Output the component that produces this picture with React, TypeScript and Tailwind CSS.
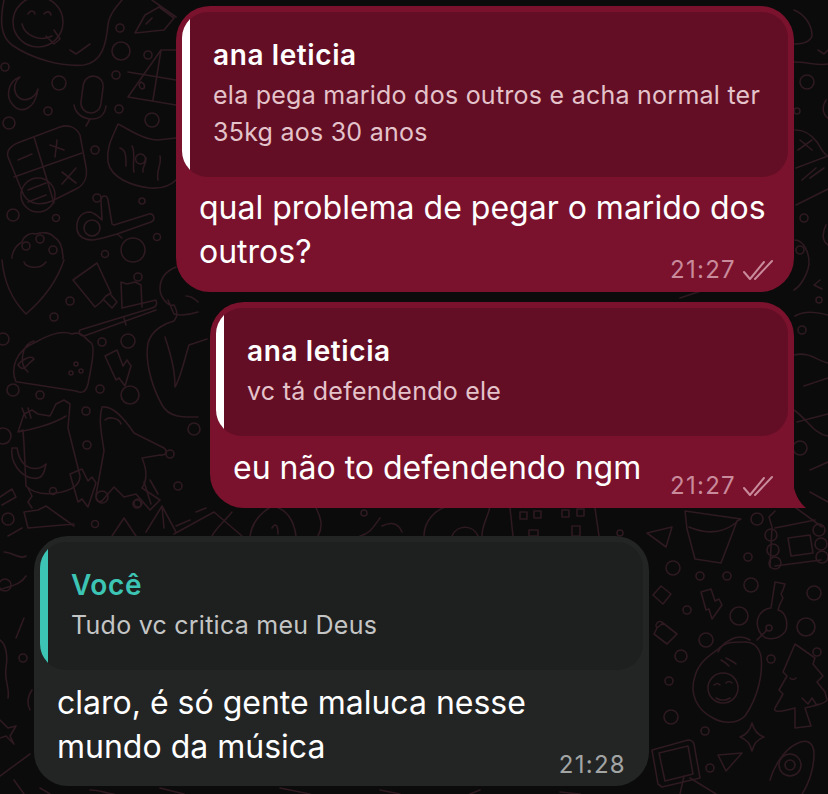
const Doodles = () => (
  <svg className="absolute inset-0" width="828" height="794" viewBox="0 0 828 794" fill="none" stroke="#2e1a20" strokeWidth="1.6" strokeLinecap="round" strokeLinejoin="round">
    {/* smiley + blob */}
    <circle cx="38" cy="22" r="25" />
    <path d="M22 24c3 12 18 18 30 12M28 14c2-4 6-4 7 0M44 14c2-3 6-3 7 1M46 36l8 8 6-5-6-9" />
    <path d="M4 0c-4 20-4 36 8 45 20 14 50 22 72 20 18-3 22-20 24-40 1-10 8-18 14-25" />
    <path d="M70 50l6 4 14-10M76 54l14-10" />
    {/* pen */}
    <path d="M135 33l10-18 14-8 15 11-10 12-29 3zM146 24l6-6M152 0l24 17" />
    <circle cx="120" cy="28" r="4" />
    <circle cx="121" cy="51" r="9" />
    <circle cx="148" cy="55" r="4" />
    <circle cx="116" cy="75" r="4" />
    <circle cx="5" cy="67" r="4" />
    <path d="M176 50h-15l-33 47 48 8M161 50l-8 50M128 72l48 8" />
    <path d="M141 82c-3 2-2 6 1 7 3 0 4-5-1-7z" />
    {/* moon, mic */}
    <path d="M20 77c-12 4-15 20-7 28 8 9 22 5 25-16-4 12-17 14-22 5-3-6-1-13 4-17z" />
    <circle cx="59" cy="83" r="7" />
    <rect x="82" y="76" width="20" height="37" rx="10" transform="rotate(8 92 95)" />
    <path d="M74 105c2 10 10 14 18 14 8 0 13-5 14-13M90 119l-4 7" />
    <circle cx="119" cy="109" r="4" />
    <circle cx="48" cy="111" r="4" />
    <circle cx="9" cy="123" r="6" />
    <circle cx="152" cy="120" r="7" />
    {/* calculator */}
    <path d="M20 142l40-15c8-3 16 0 20 8l6 32c2 10-2 18-10 22l-24 12c-14 6-26 2-30-10l-14-34c-2-7 4-12 12-15z" />
    <path d="M34 137l20 66M14 177l68-24M18 160l14-6M50 145l14 5M57 140l-2 17M62 172l14 11M76 168l-14 16" />
    <circle cx="38" cy="195" r="17" />
    <path d="M28 190l18-7M28 202l18-7" />
    {/* mitten */}
    <path d="M118 124c12 6 26 16 40 16l18-2M118 124c-6 14-12 24-10 38 3 16 24 24 42 26 14 1 22-4 26-8" />
    <path d="M120 148c6 2 6 8 6 18M132 146c4 6 0 20 2 26M146 158c0 8-4 8-3 14M160 156c2 8-4 14-2 24M140 154a5 5 0 1 0 1 0z" />
    <circle cx="95" cy="150" r="4" />
    <circle cx="97" cy="198" r="4" />
    <circle cx="142" cy="201" r="3" />
    <circle cx="13" cy="215" r="6" />
    <circle cx="56" cy="218" r="3.5" />
    <circle cx="157" cy="237" r="3.5" />
    <circle cx="105" cy="254" r="3.5" />
    {/* scissors-like tool */}
    <circle cx="92" cy="228" r="8" />
    <path d="M90 212c-10 0-14 8-13 18 2 8 8 10 16 10 8-1 16-4 24-6l34-12c5-2 3-9-2-8l-35 11-2-1-4-24c-1-6-7-5-7 1l1 19c-3-3-7-7-12-8zM117 234l5 4" />
    <circle cx="133" cy="250" r="12" />
    {/* paw and shield */}
    <path d="M12 258c0-8 6-14 10-16 2-6 8-10 14-8 6-2 14-2 18 3 6 3 9 12 9 22" />
    <circle cx="26" cy="246" r="4" />
    <circle cx="40" cy="239" r="4" />
    <circle cx="53" cy="250" r="4" />
    <path d="M2 260c2 22 10 40 24 54 14-12 30-30 38-54M24 262c2 6 16 8 22 0" />
    {/* tube + candle tray */}
    <path d="M73 280l24-17 14 30-5 3-5 6-6 5-22-27zM104 300l8 8 5-6-6-7" />
    <path d="M80 330l72-22c5-1 5-5 4-8l-34 8-1-26 6 2 8-2 6 3 1 22M80 330c-2 3 0 6 4 6l72-26M124 318l2 7" />
    <circle cx="70" cy="301" r="4" />
    <circle cx="54" cy="317" r="4" />
    <circle cx="138" cy="277" r="4" />
    <circle cx="3" cy="339" r="6" />
    <circle cx="102" cy="342" r="4" />
    <circle cx="128" cy="341" r="7" />
    {/* head + mouse */}
    <path d="M176 267c-10 4-16 12-16 22 0 8 8 18 14 16 4 8 4 10 0 16-8 2-22 8-26 22-3 16 2 40 14 62 8 14 24 12 36 12M168 300l6 14c8 2 18 0 24-2M165 337c10 30 10 42 10 50 6-10 10-30 14-42l18-6" />
    {/* taco */}
    <path d="M16 382c-6-14 0-32 20-40 14-8 26-12 36-8 10-4 14 6 18 8 6 2 2 22-2 42-2 8-6 10-12 7l-58-9zM28 372c-10-8-6-28 6-31M18 365c4-6 14-10 16-6-8 6-10 14-16 6" />
    <circle cx="76" cy="364" r="2" />
    <circle cx="71" cy="373" r="2" />
    <circle cx="81" cy="371" r="2" />
    {/* bolt */}
    <path d="M105 356l12-6 6 16 4-6 4 6-6 20-6-8-3 2-11-24z" />
    <circle cx="13" cy="390" r="6" />
    <circle cx="40" cy="395" r="4" />
    <circle cx="100" cy="389" r="4" />
    <circle cx="130" cy="395" r="9" />
    <circle cx="86" cy="411" r="4" />
    <circle cx="194" cy="429" r="6" />
    <circle cx="3" cy="436" r="8" />
    {/* bag + banana */}
    <path d="M18 432l6-18 8-4 6 4 12 2 6-12 8-4 6 4-2 24 12 48c0 10-10 14-18 16-14 3-28 2-36-6l-2-42-1-14zM18 432c12-2 36-8 48-16M22 408l4 10M28 408l3 10" />
    <path d="M12 448c-2 14 8 28 20 30 10 2 12-4 14-14-6 6-16 6-22 0-4-4-6-10-7-16h-5z" />
    <circle cx="87" cy="445" r="4" />
    {/* rocket */}
    <path d="M102 407c12-2 24 14 32 26l30 15c4 3 2 8-4 7l-18 3c6 14 4 24 0 30l18 12-10 10-14-16-12 3-10-10-12 14c-4 2-6-2-6-6l8-44c-2-16-6-30-2-44zM105 420c4-4 14-2 16 4" />
    <path d="M144 482l7 22M150 480l8 14" />
    <circle cx="170" cy="454" r="4" />
    <circle cx="178" cy="486" r="4" />
    <circle cx="138" cy="503" r="4" />
    <circle cx="102" cy="497" r="6" />
    <circle cx="53" cy="491" r="3.5" />
    {/* bolt 2 */}
    <path d="M70 474l12-5 6 12 4-4 4 6-8 24-6-8-4 3-8-28z" />
    {/* bottom of left column */}
    <path d="M0 497l12-8 4 8-14 8M28 488l4 8-4 6 4 6M24 512l14-2 8-4 28 20M24 512l4 16M28 528l46-4M112 536l12-18 12 18M146 532l16-26 14 26M162 506l2 22M176 526l14-6" />
    <circle cx="8" cy="519" r="6" />
    <circle cx="95" cy="524" r="3.5" />
    <circle cx="137" cy="504" r="4" />
    {/* right strip, top */}
    <path d="M794 10c10 4 18 14 18 26-2 6-8 8-18 8M794 62c14 0 24 4 34 2M818 50l6 4 4-4" />
    <circle cx="807" cy="82" r="7" />
    <circle cx="797" cy="111" r="3" />
    <path d="M826 100c-4 6-4 14 2 18M795 130c10 0 16 4 22 12 4 6 6 12 11 14M796 168l32-12M800 140l12 10M812 140l-14 10M810 178l14-10M816 168l-14 12M796 205l32-16" />
    <circle cx="804" cy="218" r="4" />
    <path d="M795 240c8 0 14 12 14 22s-8 24-15 28M826 225c-4 8-4 16 2 20M820 280l-6 5 8 4" />
    <circle cx="800" cy="250" r="4" />
    <circle cx="819" cy="300" r="3" />
    <path d="M795 316c10-6 22-4 33-1M794 355c14-4 24 6 34 8M804 386l24-8M794 410c14 10 20 24 34 26M797 422l31-8M810 470l18-8M810 492l18 10" />
    <circle cx="802" cy="330" r="4" />
    <circle cx="800" cy="448" r="7" />
    {/* pot, house */}
    <path d="M685 511l56 8-4 2-6 16-10 26-26-4-8-30-2-18zM689 527c14 6 32 8 48-5" />
    <path d="M647 533l25-6-6 20-19-14z" />
    <circle cx="757" cy="519" r="6" />
    <path d="M772 527l-3-10 6-6M775 528l40-8M775 566l46-6M772 527l-2 40M788 538l22-3 3 18-22 3-3-18zM792 505l30 22" />
    <circle cx="771" cy="535" r="6" />
    <circle cx="773" cy="550" r="6" />
    <circle cx="775" cy="563" r="6" />
    <circle cx="819" cy="530" r="6" />
    <circle cx="821" cy="544" r="6" />
    <circle cx="822" cy="557" r="6" />
    <circle cx="748" cy="557" r="4" />
    <circle cx="673" cy="568" r="7" />
    <circle cx="700" cy="576" r="4" />
    <circle cx="727" cy="576" r="4" />
    <circle cx="751" cy="585" r="7" />
    <circle cx="814" cy="593" r="7" />
    <path d="M653 595l8-9 10 8-8 10-10-9z" />
    <circle cx="687" cy="610" r="4" />
    <path d="M701 592l10-3 4 12 4-2 3 6-10 14-3-10-3 1-5-18z" />
    <circle cx="739" cy="616" r="9" />
    {/* key */}
    <path d="M775 582l10 2-2 6-2 4 2 4-3 6-2 6c8 2 10 12 8 20-4 8-14 10-20 8-8-4-10-14-8-20 2-6 8-10 13-10l4-26z" />
    <circle cx="769" cy="628" r="3" />
    <circle cx="806" cy="627" r="9" />
    <path d="M757 640l10-10M750 640c-6-4-14-4-20 0-6 3-10 8-12 12" />
    <path d="M657 628l6-5 14 11-10 10-13-10 3-6zM657 628a3 3 0 1 1 6-5" />
    <circle cx="706" cy="640" r="7" />
    <circle cx="681" cy="656" r="6" />
    <circle cx="771" cy="659" r="4" />
    <circle cx="817" cy="652" r="4" />
    {/* avocado */}
    <path d="M745 642c10 0 14 6 16 14 2 16-2 40-16 60-8 8-22 8-32 2-16-8-24-24-18-42 4-14 14-20 22-26 8-8 14-8 28-8z" />
    <circle cx="723" cy="688" r="15" />
    <path d="M714 685c3-2 4-2 6 0M726 683c2-2 4-2 6 0M716 698c4 3 10 3 14 0M721 660c4 2 6 4 8 6M726 658c4 2 8 4 10 6" />
    <circle cx="669" cy="681" r="4" />
    <circle cx="671" cy="717" r="7" />
    <circle cx="705" cy="731" r="4" />
    {/* star */}
    <path d="M752 723c2 8 6 12 12 14-6 2-10 6-12 14-2-8-6-12-12-14 6-2 10-6 12-14z" />
    {/* tree */}
    <path d="M795 644l-12 28 4 4-8 14 4 4-8 14c-2 4 4 4 12 2l8-2 0 20 16-2-6-18 8-2c6-2 12-2 14-6l-2-8-8-10 6-6-10-12 2-6-20-14zM790 678c2 2 4 2 6 0M802 698l6 6 4-6 4 6" />
    {/* polaroid, arrow */}
    <path d="M652 750l36-10c3 0 5 1 6 4l6 34-38 9-4-3-6-34zM659 753l29-7 5 28-28 7-6-28z" />
    <path d="M718 755l24-2-16 18-8-16z" />
    <circle cx="710" cy="768" r="4" />
    <path d="M770 780c4-14 14-30 26-36 10-6 18-2 18 10 0 12-4 28-12 40M684 776l-4 18M690 778l26 16" />
    <circle cx="790" cy="765" r="11" />
    <circle cx="790" cy="765" r="5" />
    {/* bottom strip */}
    <path d="M40 788l10 6M90 790c10 0 18 4 24 4M160 788l24 6M280 788l30 6M380 790l20 4M480 790l-10 4M560 792l20 2" />
    {/* gaps between bubbles */}
    <path d="M680 298l24-8M186 296c4 0 8 2 12 6" />
    <path d="M174 534l40-22 28 24M196 512l10-4M212 536c4-8 12-14 20-24M250 536c2-14 12-24 22-30 14 2 22 14 24 30M272 528c4-6 6-2 6 6M316 508c4 8 8 18 2 28M360 536c10-2 14-10 20-18M382 526c8-4 16-4 20 6M424 536c0-14 10-26 24-30M452 536a14 14 0 0 1 26 0M482 536c0-12 6-18 8-30M510 508l3 28M595 508l4 28" />
    <path d="M520 512h7v7h-7zM534 511h7v7h-7zM562 510h7v7h-7zM577 509h7v7h-7zM529 530h9v6h-9zM572 526h8v10h-8z" />
    <circle cx="364" cy="513" r="3" />
    <circle cx="620" cy="533" r="3" />
    {/* left strip, lower */}
    <path d="M8 536l14-8M4 552c8 0 16 8 22 4M0 590c8-4 20-4 26-14M24 618l-8 20M0 640c6 4 8 16 6 28s4 20 2 30M32 690c-4 6-6 12-2 20M0 720l8 8 8-2-6 10 4 8-8-8-6 2M0 776l30-22M14 780l10 14" />
    <circle cx="5" cy="585" r="6" />
    <circle cx="23" cy="658" r="4" />
  </svg>
);

const Checks = () => (
  <svg width="32" height="22" viewBox="0 0 32 22" fill="none" stroke="#c98a9b" strokeWidth="2" strokeLinecap="round" strokeLinejoin="round">
    <path d="M2 13l6 7L22 3M13 20L30 2" />
  </svg>
);

function Quote({ name, lines, accent, box, nameColor, textColor }: { name: string; lines: string[]; accent: string; box: string; nameColor: string; textColor: string }) {
  return (
    <div className={`flex overflow-hidden rounded-[26px] ${box}`}>
      <div className={`w-2 shrink-0 ${accent}`} />
      <div className="px-[23px] pt-[25px] pb-[26px]">
        <div className={`text-[28px] leading-[36px] font-semibold tracking-[0.6px] ${nameColor}`}>{name}</div>
        <div className={`mt-[4px] text-[25px] leading-[37px] tracking-[0.25px] ${textColor}`}>
          {lines.map((l) => <div key={l}>{l}</div>)}
        </div>
      </div>
    </div>
  );
}

function Stamp({ time, checks }: { time: string; checks?: boolean }) {
  return (
    <span className={`mb-[-10px] flex items-center gap-[6px] text-[24px] leading-[28px] tracking-[1.3px] ${checks ? 'mr-[-3px] text-[#c98a9b]' : 'text-[#a3a5a5]'}`}>
      {time}
      {checks && <Checks />}
    </span>
  );
}

export default function App() {
  return (
    <div className="relative h-[794px] w-[828px] overflow-hidden bg-[#0b0b0b] font-['Inter',sans-serif] text-white">
      <Doodles />
      <div className="relative flex flex-col pt-[6px]">
        {/* first sent message */}
        <div className="ml-[176px] mr-[34px] rounded-[34px] bg-[#7a122d] p-[6px]">
          <Quote name="ana leticia" lines={['ela pega marido dos outros e acha normal ter', '35kg aos 30 anos']} accent="bg-white" box="bg-[#630e24]" nameColor="text-white" textColor="text-[#e4c3cb]" />
          <div className="px-[17px] pt-[9px] pb-[12px] text-[32px] leading-[44px]">
            <div>qual problema de pegar o marido dos</div>
            <div className="flex items-end justify-between">
              <span>outros?</span>
              <Stamp time="21:27" checks />
            </div>
          </div>
        </div>

        {/* second sent message */}
        <div className="relative ml-[210px] mr-[34px] mt-[10px] rounded-[34px] rounded-br-none bg-[#7a122d] p-[6px]">
          <Quote name="ana leticia" lines={['vc tá defendendo ele']} accent="bg-white" box="bg-[#630e24]" nameColor="text-white" textColor="text-[#e4c3cb]" />
          <div className="flex items-end justify-between px-[17px] pt-[10px] pb-[12px] text-[32px] leading-[44px]">
            <span>eu não to defendendo ngm</span>
            <Stamp time="21:27" checks />
          </div>
          <svg className="absolute right-[-12px] bottom-0" width="34" height="20" viewBox="0 0 34 20" fill="#7a122d">
            <path d="M0 20C10 20 17 14 20 8 C21 4 22 2 22 0 C24 8 28 15 34 20Z" />
          </svg>
        </div>

        {/* received message */}
        <div className="ml-[34px] mr-[179px] mt-[28px] rounded-[34px] bg-[#232525] p-[6px]">
          <Quote name="Você" lines={['Tudo vc critica meu Deus']} accent="bg-[#3cc4b4]" box="bg-[#1e1f1f]" nameColor="text-[#3cc4b4]" textColor="text-[#c4c5c5]" />
          <div className="px-[17px] pt-[11px] pb-[11px] text-[32px] leading-[44px]">
            <div>claro, é só gente maluca nesse</div>
            <div className="flex items-end justify-between">
              <span>mundo da música</span>
              <Stamp time="21:28" />
            </div>
          </div>
        </div>
      </div>
    </div>
  );
}
